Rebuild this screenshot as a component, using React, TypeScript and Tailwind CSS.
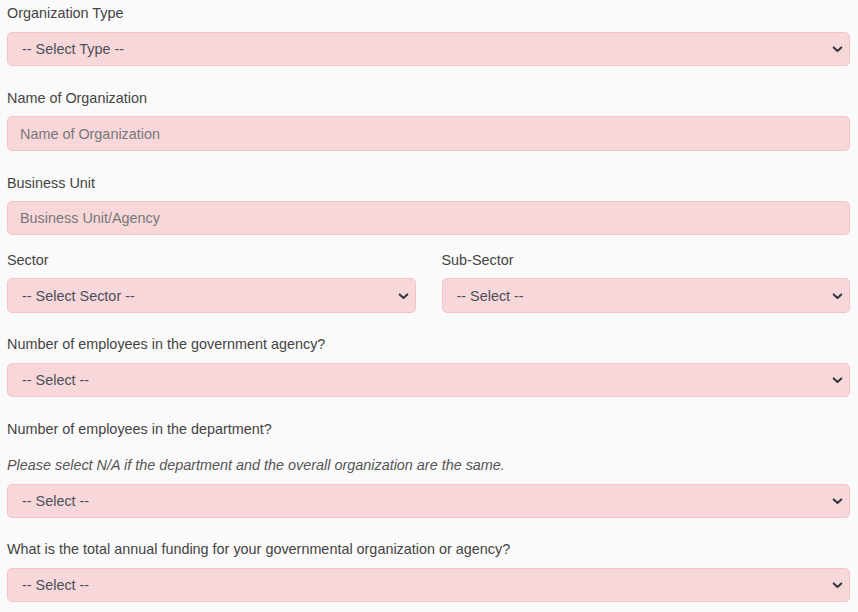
import React from "react";

const fieldCls =
  "block w-full rounded-[5px] border border-[#f5c2c7] bg-[#f8d7da] text-[14.4px] text-[#495057] outline-none";

function Chevron() {
  return (
    <svg
      className="pointer-events-none absolute right-[7px] top-1/2 -translate-y-1/2"
      width="11"
      height="8"
      viewBox="0 0 11 8"
      fill="none"
    >
      <path d="M1.7 2.4l3.8 3.6 3.8-3.6" stroke="#343a40" strokeWidth="2.1" strokeLinecap="round" strokeLinejoin="round" />
    </svg>
  );
}

function SelectField({ value, h = "h-[34px]" }: { value: string; h?: string }) {
  return (
    <div className="relative">
      <select defaultValue="" className={`${fieldCls} ${h} appearance-none pl-[14px] pr-8 pt-[2px]`}>
        <option value="">{value}</option>
      </select>
      <Chevron />
    </div>
  );
}

function Label({ children, mb = "mb-[9px]" }: { children: React.ReactNode; mb?: string }) {
  return <label className={`block text-[14.4px] leading-[20px] text-[#444] ${mb}`}>{children}</label>;
}

export default function App() {
  return (
    <div
      className="min-h-[612px] bg-[#fafafa] pl-[7px] pr-[8px] pt-[3px]"
      style={{ fontFamily: '"Liberation Sans", Arial, sans-serif' }}
    >
      <div className="mb-[22px]">
        <Label>Organization Type</Label>
        <SelectField value="-- Select Type --" />
      </div>

      <div className="mb-[22px]">
        <Label mb="mb-[8px]">Name of Organization</Label>
        <input placeholder="Name of Organization" className={`${fieldCls} h-[35px] px-[12px] placeholder:text-[#777]`} />
      </div>

      <div className="mb-[15px]">
        <Label mb="mb-[8px]">Business Unit</Label>
        <input placeholder="Business Unit/Agency" className={`${fieldCls} h-[34px] px-[12px] placeholder:text-[#777]`} />
      </div>

      <div className="mb-[21px] grid grid-cols-2 gap-x-[26px]">
        <div>
          <Label mb="mb-[8px]">Sector</Label>
          <SelectField value="-- Select Sector --" h="h-[35px]" />
        </div>
        <div>
          <Label mb="mb-[8px]">Sub-Sector</Label>
          <SelectField value="-- Select --" h="h-[35px]" />
        </div>
      </div>

      <div className="mb-[22px]">
        <Label>Number of employees in the government agency?</Label>
        <SelectField value="-- Select --" />
      </div>

      <div className="mb-[21px]">
        <Label mb="mb-[16px]">Number of employees in the department?</Label>
        <p className="mb-[9px] text-[14.4px] leading-[20px] italic text-[#555]">
          Please select N/A if the department and the overall organization are the same.
        </p>
        <SelectField value="-- Select --" />
      </div>

      <div>
        <Label>What is the total annual funding for your governmental organization or agency?</Label>
        <SelectField value="-- Select --" />
      </div>
    </div>
  );
}
